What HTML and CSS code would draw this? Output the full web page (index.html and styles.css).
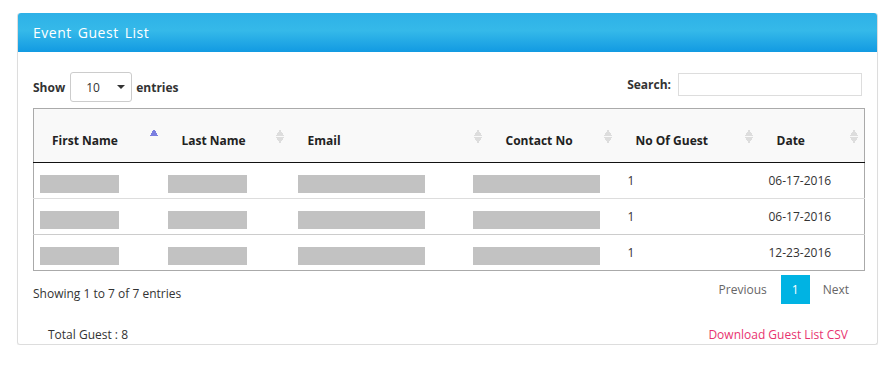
FILE: index.html
```html
<!DOCTYPE html>
<html lang="en">
<head>
    <meta charset="UTF-8">
    <title>Event Guest List</title>
    <link rel="stylesheet" href="styles.css">
</head>
<body>
    <div class="panel">
        <div class="panel-heading">Event Guest List</div>
        <div class="panel-body">
            <div class="table-top">
                <label class="length">Show
                    <span class="select">10 <span class="caret"></span></span>
                    entries</label>
                <label class="search">Search: <input type="text"></label>
            </div>

            <table class="guests">
                <colgroup>
                    <col style="width: 130px">
                    <col style="width: 126px">
                    <col style="width: 198px">
                    <col style="width: 130px">
                    <col style="width: 141px">
                    <col>
                </colgroup>
                <thead>
                    <tr>
                        <th class="sorted">First Name</th>
                        <th>Last Name</th>
                        <th>Email</th>
                        <th>Contact No</th>
                        <th>No Of Guest</th>
                        <th>Date</th>
                    </tr>
                </thead>
                <tbody>
                    <tr>
                        <td><span class="blur short"></span></td>
                        <td><span class="blur short"></span></td>
                        <td><span class="blur long"></span></td>
                        <td><span class="blur long shift"></span></td>
                        <td>1</td>
                        <td>06-17-2016</td>
                    </tr>
                    <tr>
                        <td><span class="blur short"></span></td>
                        <td><span class="blur short"></span></td>
                        <td><span class="blur long"></span></td>
                        <td><span class="blur long shift"></span></td>
                        <td>1</td>
                        <td>06-17-2016</td>
                    </tr>
                    <tr>
                        <td><span class="blur short"></span></td>
                        <td><span class="blur short"></span></td>
                        <td><span class="blur long"></span></td>
                        <td><span class="blur long shift"></span></td>
                        <td>1</td>
                        <td>12-23-2016</td>
                    </tr>
                </tbody>
            </table>

            <div class="table-bottom">
                <div class="info">Showing 1 to 7 of 7 entries</div>
                <div class="paging">
                    <a>Previous</a>
                    <a class="current">1</a>
                    <a>Next</a>
                </div>
            </div>

            <div class="panel-footer">
                <span>Total Guest : 8</span>
                <a class="download">Download Guest List CSV</a>
            </div>
        </div>
    </div>
</body>
</html>
```

FILE: styles.css
```css
body {
    margin: 0;
    padding: 13px 15px 0 17px;
    font-family: "Open Sans", sans-serif;
    font-size: 12px;
    color: #333;
    background: #fff;
}
.panel {
    width: 859px;
    border: 1px solid #ddd;
    border-top: none;
    border-radius: 3px;
    box-shadow: 0 1px 1px rgba(0, 0, 0, 0.06);
}
.panel-heading {
    height: 39px;
    line-height: 39px;
    padding-left: 15px;
    color: #fff;
    font-size: 14px;
    letter-spacing: 0.5px;
    word-spacing: 2px;
    background: linear-gradient(#2eb1e7, #35b9e9 45%, #129ae2);
    border-radius: 3px 3px 0 0;
}
.panel-body {
    padding: 20px 14px 0 15px;
}
.table-top {
    display: flex;
    justify-content: space-between;
    align-items: center;
    height: 30px;
    margin-bottom: 6px;
}
.length {
    font-weight: bold;
    display: flex;
    align-items: center;
    gap: 4px;
}
.select {
    display: inline-flex;
    align-items: center;
    justify-content: space-between;
    box-sizing: border-box;
    width: 62px;
    height: 30px;
    margin-left: 1px;
    padding: 0 6px 0 15px;
    border: 1px solid #ccc;
    border-radius: 3px;
    font-weight: normal;
    color: #333;
}
.caret {
    width: 0;
    height: 0;
    border-left: 4px solid transparent;
    border-right: 4px solid transparent;
    border-top: 4px solid #333;
}
.search {
    font-weight: bold;
    display: flex;
    align-items: center;
    gap: 7px;
    margin-top: -6px;
}
.search input {
    width: 182px;
    height: 21px;
    padding: 0;
    margin-right: 1px;
    border: 1px solid #ddd;
}
.guests {
    width: 832px;
    border-collapse: collapse;
    border: 1px solid #aaa;
    table-layout: fixed;
}
.guests th {
    height: 43px;
    padding: 10px 18px 0;
    text-align: left;
    background: #f9f9f9;
    border-bottom: 1px solid #111;
    position: relative;
    color: #222;
}
.guests th::after {
    content: "";
    position: absolute;
    right: 6px;
    top: 20px;
    width: 8px;
    height: 15px;
    background:
        linear-gradient(to bottom right, transparent 50%, #ddd 50%) 0 0 / 4px 7px no-repeat,
        linear-gradient(to bottom left, transparent 50%, #ddd 50%) 4px 0 / 4px 7px no-repeat,
        linear-gradient(to top right, transparent 50%, #ddd 50%) 0 8px / 4px 7px no-repeat,
        linear-gradient(to top left, transparent 50%, #ddd 50%) 4px 8px / 4px 7px no-repeat;
}
.guests th.sorted::after {
    background:
        linear-gradient(to bottom right, transparent 48%, #7b7fe0 48%) 0 0 / 4px 7px no-repeat,
        linear-gradient(to bottom left, transparent 48%, #7b7fe0 48%) 4px 0 / 4px 7px no-repeat;
}
.guests td {
    height: 35px;
    padding: 0 10px 0 6px;
    border-top: 1px solid #ddd;
}
.guests td:nth-child(2) { padding-left: 4px; }
.guests td:nth-child(3) { padding-left: 8px; }
.guests td:nth-child(5),
.guests td:nth-child(6) { padding-left: 10px; }
.guests tbody tr:first-child td { border-top: none; }
.guests tbody tr:last-child td { border-top-color: #ccc; }
.blur {
    display: block;
    height: 18px;
    margin-top: 6px;
    background: #c2c2c2;
}
.blur.short { width: 79px; }
.blur.long { width: 127px; }
.blur.shift { margin-left: -21px; }
.table-bottom {
    display: flex;
    justify-content: space-between;
    align-items: flex-start;
    width: 832px;
    margin-top: 4px;
}
.info {
    padding-top: 10px;
}
.paging {
    display: flex;
    align-items: center;
    margin-right: 2px;
}
.paging a {
    padding: 6px 14px 6px 13px;
    color: #666;
}
.paging a.current {
    background: #00b3e3;
    color: #fff;
    padding: 6px 11px;
}
.panel-footer {
    display: flex;
    justify-content: space-between;
    width: 800px;
    padding: 22px 0 1px 15px;
}
.download {
    color: #e83370;
}
```
